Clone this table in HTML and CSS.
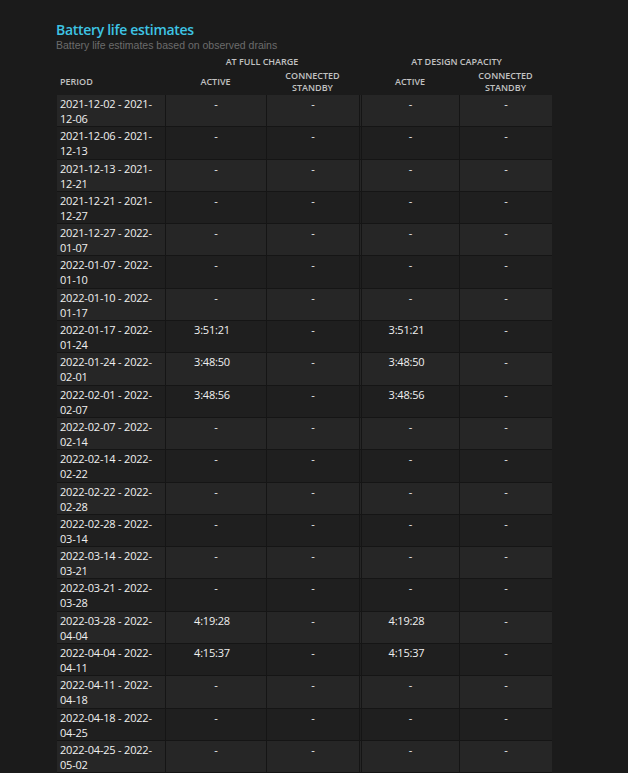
FILE: index.html
```html
<!DOCTYPE html>
<html lang="en">
<head>
<meta charset="utf-8">
<title>Battery life estimates</title>
<link rel="stylesheet" href="styles.css">
</head>
<body>
<div class="page">
  <h2 class="title">Battery life estimates</h2>
  <div class="explanation">Battery life estimates based on observed drains</div>
  <table class="est">
    <colgroup>
      <col class="c-period">
      <col class="c-active">
      <col class="c-standby">
      <col class="c-break">
      <col class="c-dactive">
      <col class="c-dstandby">
    </colgroup>
    <thead>
      <tr class="group">
        <th></th>
        <th colspan="2" class="centered">AT FULL CHARGE</th>
        <th></th>
        <th colspan="2" class="centered">AT DESIGN CAPACITY</th>
      </tr>
      <tr class="sub">
        <th class="left">PERIOD</th>
        <th class="centered">ACTIVE</th>
        <th class="centered">CONNECTED<br>STANDBY</th>
        <th></th>
        <th class="centered">ACTIVE</th>
        <th class="centered">CONNECTED<br>STANDBY</th>
      </tr>
    </thead>
    <tbody>
      <tr class="odd"><td class="period">2021-12-02 - 2021-12-06</td><td>-</td><td>-</td><td class="brk"></td><td>-</td><td>-</td></tr>
      <tr class="even"><td class="period">2021-12-06 - 2021-12-13</td><td>-</td><td>-</td><td class="brk"></td><td>-</td><td>-</td></tr>
      <tr class="odd"><td class="period">2021-12-13 - 2021-12-21</td><td>-</td><td>-</td><td class="brk"></td><td>-</td><td>-</td></tr>
      <tr class="even"><td class="period">2021-12-21 - 2021-12-27</td><td>-</td><td>-</td><td class="brk"></td><td>-</td><td>-</td></tr>
      <tr class="odd"><td class="period">2021-12-27 - 2022-01-07</td><td>-</td><td>-</td><td class="brk"></td><td>-</td><td>-</td></tr>
      <tr class="even"><td class="period">2022-01-07 - 2022-01-10</td><td>-</td><td>-</td><td class="brk"></td><td>-</td><td>-</td></tr>
      <tr class="odd"><td class="period">2022-01-10 - 2022-01-17</td><td>-</td><td>-</td><td class="brk"></td><td>-</td><td>-</td></tr>
      <tr class="even"><td class="period">2022-01-17 - 2022-01-24</td><td class="t">3:51:21</td><td>-</td><td class="brk"></td><td class="t">3:51:21</td><td>-</td></tr>
      <tr class="odd"><td class="period">2022-01-24 - 2022-02-01</td><td class="t">3:48:50</td><td>-</td><td class="brk"></td><td class="t">3:48:50</td><td>-</td></tr>
      <tr class="even"><td class="period">2022-02-01 - 2022-02-07</td><td class="t">3:48:56</td><td>-</td><td class="brk"></td><td class="t">3:48:56</td><td>-</td></tr>
      <tr class="odd"><td class="period">2022-02-07 - 2022-02-14</td><td>-</td><td>-</td><td class="brk"></td><td>-</td><td>-</td></tr>
      <tr class="even"><td class="period">2022-02-14 - 2022-02-22</td><td>-</td><td>-</td><td class="brk"></td><td>-</td><td>-</td></tr>
      <tr class="odd"><td class="period">2022-02-22 - 2022-02-28</td><td>-</td><td>-</td><td class="brk"></td><td>-</td><td>-</td></tr>
      <tr class="even"><td class="period">2022-02-28 - 2022-03-14</td><td>-</td><td>-</td><td class="brk"></td><td>-</td><td>-</td></tr>
      <tr class="odd"><td class="period">2022-03-14 - 2022-03-21</td><td>-</td><td>-</td><td class="brk"></td><td>-</td><td>-</td></tr>
      <tr class="even"><td class="period">2022-03-21 - 2022-03-28</td><td>-</td><td>-</td><td class="brk"></td><td>-</td><td>-</td></tr>
      <tr class="odd"><td class="period">2022-03-28 - 2022-04-04</td><td class="t">4:19:28</td><td>-</td><td class="brk"></td><td class="t">4:19:28</td><td>-</td></tr>
      <tr class="even"><td class="period">2022-04-04 - 2022-04-11</td><td class="t">4:15:37</td><td>-</td><td class="brk"></td><td class="t">4:15:37</td><td>-</td></tr>
      <tr class="odd"><td class="period">2022-04-11 - 2022-04-18</td><td>-</td><td>-</td><td class="brk"></td><td>-</td><td>-</td></tr>
      <tr class="even"><td class="period">2022-04-18 - 2022-04-25</td><td>-</td><td>-</td><td class="brk"></td><td>-</td><td>-</td></tr>
      <tr class="odd"><td class="period">2022-04-25 - 2022-05-02</td><td>-</td><td>-</td><td class="brk"></td><td>-</td><td>-</td></tr>
    </tbody>
  </table>
</div>
</body>
</html>
```

FILE: styles.css
```css
html, body {
  margin: 0;
  padding: 0;
  background: #1b1b1b;
}

body {
  font-family: "Open Sans", "Noto Sans", sans-serif;
  color: #f0f0f0;
}

.page {
  padding: 20px 0 0 56px;
}

.title {
  margin: 0;
  font-size: 14px;
  line-height: 19px;
  font-weight: 600;
  color: #3ec4e4;
  letter-spacing: -0.3px;
}

.explanation {
  font-family: "Liberation Sans", Arial, sans-serif;
  font-size: 10.5px;
  line-height: 12px;
  color: #6c6c6c;
}

.est {
  margin: 4px 0 0 1px;
  border-collapse: separate;
  border-spacing: 0;
  table-layout: fixed;
  width: 495px;
}

.c-period { width: 108px; }
.c-active { width: 101px; }
.c-standby { width: 93px; }
.c-break { width: 2px; }
.c-dactive { width: 98px; }
.c-dstandby { width: 93px; }

.est th {
  font-size: 9px;
  font-weight: 600;
  color: #c2c2c2;
  padding: 0;
  letter-spacing: 0;
}

.group th {
  height: 13px;
  line-height: 13px;
}

.sub th {
  height: 27px;
  line-height: 12px;
  vertical-align: middle;
}

.left { text-align: left; padding-left: 3px !important; }
.centered { text-align: center; }

.est td {
  box-sizing: border-box;
  font-size: 11px;
  letter-spacing: -0.2px;
  line-height: 15px;
  padding: 1px 3px 0.3px;
  text-align: center;
  vertical-align: top;
  border-left: 1px solid #151515;
  border-bottom: 1px solid #151515;
}

.est td.period {
  text-align: left;
  border-left: 0;
}

.est td.brk {
  padding: 0;
}

.est td.t {
  padding-right: 11px;
}

.odd td { background: #262626; }
.even td { background: #1f1f1f; }
```
